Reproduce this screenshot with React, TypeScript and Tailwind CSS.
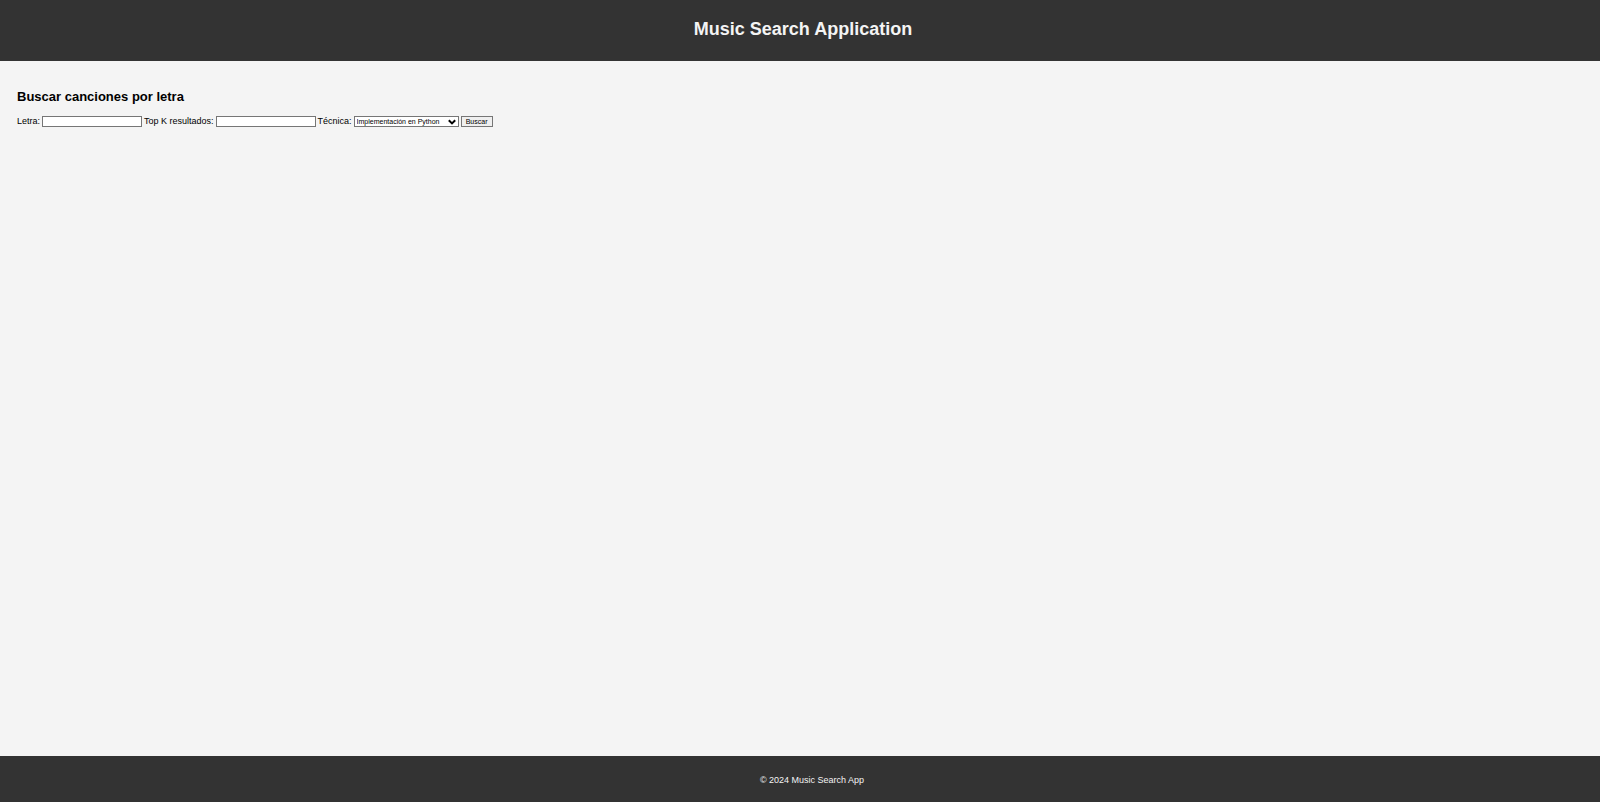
import { useState } from "react";

export default function App() {
  const [lyrics, setLyrics] = useState("");
  const [topK, setTopK] = useState("");
  return (
    <div className="flex min-h-screen flex-col bg-[#f4f4f4] font-['Liberation_Sans',Arial,sans-serif] text-[9px] text-black">
      <header className="flex h-[61px] items-center justify-center bg-[#333333] pb-1 pl-1.5 text-[#f4f4f4]">
        <h1 className="text-[18px] leading-6 font-bold">Music Search Application</h1>
      </header>
      <main className="flex-1 px-[17px] pt-7">
        <h2 className="text-[13px] leading-4 font-bold">Buscar canciones por letra</h2>
        <form className="mt-2.5 flex flex-wrap items-center gap-0.5" onSubmit={(e) => e.preventDefault()}>
          <label htmlFor="lyrics">Letra:</label>
          <input
            id="lyrics"
            type="text"
            value={lyrics}
            onChange={(e) => setLyrics(e.target.value)}
            className="h-[11px] w-[100px] border border-[#767676] bg-white px-px text-[7px]"
          />
          <label htmlFor="topk">Top K resultados:</label>
          <input
            id="topk"
            type="text"
            value={topK}
            onChange={(e) => setTopK(e.target.value)}
            className="h-[11px] w-[100px] border border-[#767676] bg-white px-px text-[7px]"
          />
          <label htmlFor="technique">Técnica:</label>
          <div className="relative flex">
            <select
              id="technique"
              className="h-[11px] w-[105px] appearance-none border border-[#767676] bg-white pl-0.5 text-[7px] leading-[9px]"
            >
              <option>Implementación en Python</option>
            </select>
            <svg
              viewBox="0 0 8 6"
              className="pointer-events-none absolute top-[3px] right-[3px] h-1.5 w-2"
              fill="none"
              stroke="black"
              strokeWidth="2"
              aria-hidden="true"
            >
              <path d="M0.8 1.2 4 4.4 7.2 1.2" />
            </svg>
          </div>
          <button
            type="submit"
            className="h-[11px] w-8 border border-[#767676] bg-[#efefef] text-[7px] leading-[9px]"
          >
            Buscar
          </button>
        </form>
      </main>
      <footer className="flex h-[46px] items-center justify-center bg-[#333333] pt-1 pl-6 text-[#f4f4f4]">
        <p>© 2024 Music Search App</p>
      </footer>
    </div>
  );
}
